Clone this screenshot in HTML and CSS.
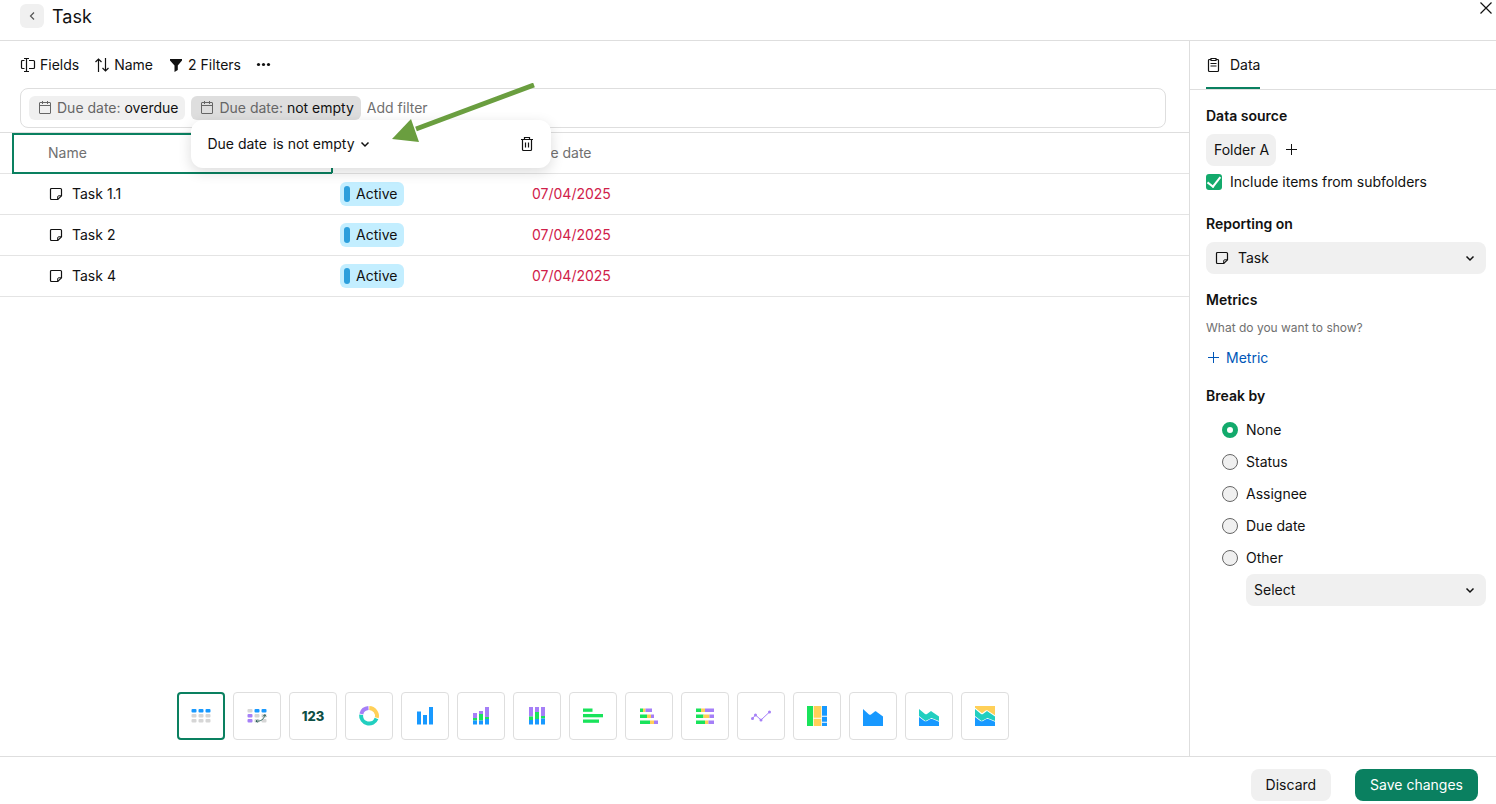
FILE: index.html
```html
<!DOCTYPE html>
<html lang="en">
<head>
    <meta charset="UTF-8">
    <meta name="viewport" content="width=device-width, initial-scale=1.0">
    <title>Task</title>
    <link rel="stylesheet" href="styles.css">
</head>
<body>
    <svg class="sprite" aria-hidden="true">
        <symbol id="i-note" viewBox="0 0 16 16">
            <path d="M3.500 2.500h9a1 1 0 0 1 1 1v6.300l-3.700 3.700H3.500a1 1 0 0 1-1-1v-9a1 1 0 0 1 1-1z" fill="none" stroke="currentColor" stroke-width="1.200"/>
            <path d="M9.700 13.500v-2.700a1 1 0 0 1 1-1h2.800" fill="none" stroke="currentColor"/>
        </symbol>
        <symbol id="i-calendar" viewBox="0 0 16 16">
            <path d="M3 2.500h10a.5.5 0 0 1 .5.5v10a.5.5 0 0 1-.5.5H3a.5.5 0 0 1-.5-.5V3a.5.5 0 0 1 .5-.5zM2.500 5.500h11M5.500 1v3M10.500 1v3" fill="none" stroke="currentColor"/>
        </symbol>
        <symbol id="i-chevron" viewBox="0 0 16 16">
            <path d="M4.500 6.500 8 10l3.500-3.500" fill="none" stroke="currentColor" stroke-width="1.500"/>
        </symbol>
        <symbol id="i-plus" viewBox="0 0 16 16">
            <path d="M7.500 2v11M2 7.500h11" fill="none" stroke="currentColor"/>
        </symbol>
    </svg>

    <header class="header">
        <button class="back-btn" aria-label="Back">
            <svg width="16" height="16" viewBox="0 0 16 16"><path d="M10 4.500 6.500 8l3.500 3.500" fill="none" stroke="currentColor" stroke-width="1.200"/></svg>
        </button>
        <h1>Task</h1>
        <button class="close-btn" aria-label="Close">
            <svg width="16" height="16" viewBox="0 0 16 16"><path d="M2.500 2.500l11 11M13.500 2.500l-11 11" fill="none" stroke="currentColor" stroke-width="1.200"/></svg>
        </button>
    </header>

    <div class="content">
        <main class="main">
            <div class="toolbar">
                <button class="tool-btn">
                    <svg width="16" height="16" viewBox="0 0 16 16"><path d="M4.500 3.500h-2a1 1 0 0 0-1 1v6a1 1 0 0 0 1 1h2M9 3.500h4.500a1 1 0 0 1 1 1v6a1 1 0 0 1-1 1H9M6.500 1.500v13M4 1.500h5M4 14.500h5" fill="none" stroke="currentColor" stroke-width="1.200"/></svg>
                    Fields
                </button>
                <button class="tool-btn">
                    <svg width="16" height="16" viewBox="0 0 16 16"><path d="M4.500 15V2M1.500 5l3-3 3 3M11.500 1v13M8.500 11l3 3 3-3" fill="none" stroke="currentColor" stroke-width="1.200"/></svg>
                    Name
                </button>
                <button class="tool-btn">
                    <svg width="16" height="16" viewBox="0 0 16 16"><path d="M2 2h12v1.500L9.800 8.500V13L6.500 15V8.500L2 3.500z" fill="currentColor"/></svg>
                    2 Filters
                </button>
                <button class="tool-btn" aria-label="More">
                    <svg width="16" height="16" viewBox="0 0 16 16" fill="currentColor"><circle cx="2.500" cy="7.500" r="1.600"/><circle cx="7.500" cy="7.500" r="1.600"/><circle cx="12.500" cy="7.500" r="1.600"/></svg>
                </button>
            </div>

            <div class="filter-bar">
                <button class="chip">
                    <svg width="16" height="16"><use href="#i-calendar"/></svg>
                    <span>Due date: <b>overdue</b></span>
                </button>
                <div class="chip-wrap">
                    <button class="chip chip-open">
                        <svg width="16" height="16"><use href="#i-calendar"/></svg>
                        <span>Due date: <b>not empty</b></span>
                    </button>
                    <div class="popover">
                        <label for="condition">Due date</label>
                        <div class="select-inline">
                            <select id="condition"><option>is not empty</option></select>
                            <svg width="16" height="16"><use href="#i-chevron"/></svg>
                        </div>
                        <button class="delete-btn" aria-label="Delete filter">
                            <svg width="16" height="16" viewBox="0 0 16 16"><path d="M2 3.500h12M5.500 3.500v-2h5v2M3.500 3.500v10a1 1 0 0 0 1 1h7a1 1 0 0 0 1-1v-10M6.500 6.500v5M9.500 6.500v5" fill="none" stroke="currentColor" stroke-width="1.200"/></svg>
                        </button>
                        <svg class="pointer" width="144" height="60" viewBox="0 0 144 60">
                            <path d="M142 2 24 46" stroke="#6a9e3f" stroke-width="5" fill="none"/>
                            <path d="M0 56 19 36 27 59z" fill="#6a9e3f"/>
                        </svg>
                    </div>
                </div>
                <input class="filter-input" type="text" placeholder="Add filter" aria-label="Add filter">
            </div>

            <table class="items">
                <thead>
                    <tr>
                        <th class="col-name"><div class="active-cell">Name</div></th>
                        <th class="col-status">Status</th>
                        <th>Due date</th>
                    </tr>
                </thead>
                <tbody>
                    <tr>
                        <td><div class="item-name"><svg width="16" height="16"><use href="#i-note"/></svg>Task 1.1</div></td>
                        <td><span class="status">Active</span></td>
                        <td class="overdue">07/04/2025</td>
                    </tr>
                    <tr>
                        <td><div class="item-name"><svg width="16" height="16"><use href="#i-note"/></svg>Task 2</div></td>
                        <td><span class="status">Active</span></td>
                        <td class="overdue">07/04/2025</td>
                    </tr>
                    <tr>
                        <td><div class="item-name"><svg width="16" height="16"><use href="#i-note"/></svg>Task 4</div></td>
                        <td><span class="status">Active</span></td>
                        <td class="overdue">07/04/2025</td>
                    </tr>
                </tbody>
            </table>

            <div class="chart-types">
                <button class="chart-btn selected" aria-label="Table">
                    <svg width="24" height="24" viewBox="0 0 24 24">
                        <g fill="#1899ff"><rect x="2.500" y="5" width="5" height="3.500" rx="1"/><rect x="9.500" y="5" width="5" height="3.500" rx="1"/><rect x="16.500" y="5" width="5" height="3.500" rx="1"/></g>
                        <g fill="#d6d6d6"><rect x="2.500" y="10" width="5" height="3.500" rx="1"/><rect x="9.500" y="10" width="5" height="3.500" rx="1"/><rect x="16.500" y="10" width="5" height="3.500" rx="1"/><rect x="2.500" y="15" width="5" height="3.500" rx="1"/><rect x="9.500" y="15" width="5" height="3.500" rx="1"/><rect x="16.500" y="15" width="5" height="3.500" rx="1"/></g>
                    </svg>
                </button>
                <button class="chart-btn" aria-label="Pivot table">
                    <svg width="24" height="24" viewBox="0 0 24 24">
                        <g fill="#d6d6d6"><rect x="2.500" y="5" width="5" height="3.500" rx="1"/><rect x="9.500" y="10" width="5" height="3.500" rx="1"/><rect x="16.500" y="10" width="5" height="3.500" rx="1"/><rect x="9.500" y="15" width="5" height="3.500" rx="1"/><rect x="16.500" y="15" width="5" height="3.500" rx="1"/></g>
                        <g fill="#1899ff"><rect x="9.500" y="5" width="5" height="3.500" rx="1"/><rect x="16.500" y="5" width="5" height="3.500" rx="1"/></g>
                        <g fill="#a57ff7"><rect x="2.500" y="10" width="5" height="3.500" rx="1"/><rect x="2.500" y="15" width="5" height="3.500" rx="1"/></g>
                        <path d="M11 17.200c5 .3 8-2 8.700-6M18 12.300l1.800-1.800 1.200 2M12.300 15.800 11 17.200l1.500 1.200" fill="none" stroke="#0f4f46" stroke-width=".8"/>
                    </svg>
                </button>
                <button class="chart-btn number">123</button>
                <button class="chart-btn" aria-label="Donut chart">
                    <svg width="24" height="24" viewBox="0 0 24 24" fill="none" stroke-width="4">
                        <path d="M12.300 4a8 8 0 0 1 7.500 9.700" stroke="#ffd058"/>
                        <path d="M19.500 14.500a8 8 0 0 1-15.400-3.700" stroke="#22cfc0"/>
                        <path d="M4.300 9.900A8 8 0 0 1 11.500 4" stroke="#a57ff7"/>
                    </svg>
                </button>
                <button class="chart-btn" aria-label="Column chart">
                    <svg width="24" height="24" viewBox="0 0 24 24" fill="#1899ff"><rect x="4" y="7.500" width="4" height="13"/><rect x="10" y="11" width="4" height="9.500"/><rect x="16" y="3" width="4" height="17.500"/></svg>
                </button>
                <button class="chart-btn" aria-label="Stacked column chart">
                    <svg width="24" height="24" viewBox="0 0 24 24">
                        <path d="M4 9h4v5H4zM10 7h4v3h-4zM16 3h4v10h-4z" fill="#a57ff7"/>
                        <path d="M4 14h4v2.500H4zM10 10h4v6.500h-4zM16 13h4v2h-4z" fill="#19e35b"/>
                        <path d="M4 16.500h4v4H4zM10 16.500h4v4h-4zM16 15h4v5.500h-4z" fill="#1899ff"/>
                    </svg>
                </button>
                <button class="chart-btn" aria-label="100% stacked column chart">
                    <svg width="24" height="24" viewBox="0 0 24 24">
                        <path d="M4 3h4v9.500H4zM10 3h4v5h-4zM16 3h4v9h-4z" fill="#a57ff7"/>
                        <path d="M4 12.500h4V16H4zM10 8h4v7h-4zM16 12h4v2.500h-4z" fill="#19e35b"/>
                        <path d="M4 16h4v4.500H4zM10 15h4v5.500h-4zM16 14.500h4v6h-4z" fill="#1899ff"/>
                    </svg>
                </button>
                <button class="chart-btn" aria-label="Bar chart">
                    <svg width="24" height="24" viewBox="0 0 24 24" fill="#19e35b"><rect x="2" y="4.500" width="9.500" height="3.300"/><rect x="2" y="10" width="20" height="3.300"/><rect x="2" y="15.500" width="16" height="3.300"/></svg>
                </button>
                <button class="chart-btn" aria-label="Stacked bar chart">
                    <svg width="24" height="24" viewBox="0 0 24 24">
                        <path d="M3 4.500h3V8H3zM3 10.500h7V14H3zM3 16.500h10V20H3z" fill="#19e35b"/>
                        <path d="M6 4.500h2.500V8H6zM10 10.500h4V14h-4zM13 16.500h4V20h-4z" fill="#ffd058"/>
                        <path d="M8.500 4.500H15V8H8.500zM14 10.500h3V14h-3zM17 16.500h4V20h-4z" fill="#a57ff7"/>
                    </svg>
                </button>
                <button class="chart-btn" aria-label="100% stacked bar chart">
                    <svg width="24" height="24" viewBox="0 0 24 24">
                        <path d="M3 4.500h5V8H3zM3 10.500h7.500V14H3zM3 16.500h9V20H3z" fill="#19e35b"/>
                        <path d="M8 4.500h4V8H8zM10.500 10.500h6V14h-6zM12 16.500h3.500V20H12z" fill="#ffd058"/>
                        <path d="M12 4.500h9V8h-9zM16.500 10.500H21V14h-4.500zM15.500 16.500H21V20h-5.500z" fill="#a57ff7"/>
                    </svg>
                </button>
                <button class="chart-btn" aria-label="Line chart">
                    <svg width="24" height="24" viewBox="0 0 24 24" fill="#a57ff7">
                        <path d="M3.500 14.500 6.500 11l5.500 5 8.500-8" fill="none" stroke="#a57ff7"/>
                        <circle cx="3.500" cy="14.500" r="1.500"/><circle cx="6.500" cy="11" r="1.500"/><circle cx="12" cy="16" r="1.500"/><circle cx="20.500" cy="8" r="1.500"/>
                    </svg>
                </button>
                <button class="chart-btn" aria-label="Treemap">
                    <svg width="24" height="24" viewBox="0 0 24 24">
                        <path d="M2 2h6v20H2z" fill="#19e35b"/>
                        <path d="M8.700 2h7.600v11.700H8.700zM8.700 14.700h7.600V22H8.700z" fill="#ffd058"/>
                        <path d="M17 2h5v9.700h-5zM17 12.700h5v5h-5zM17 18.700h5V22h-5z" fill="#1899ff"/>
                    </svg>
                </button>
                <button class="chart-btn" aria-label="Area chart">
                    <svg width="24" height="24" viewBox="0 0 24 24"><path d="M2 5l6 5.500c1 .6 1.500.3 2 0l3.500-2.800c1-.6 1.500-.3 2 0L22 12.500V22H2z" fill="#1899ff"/></svg>
                </button>
                <button class="chart-btn" aria-label="Stacked area chart">
                    <svg width="24" height="24" viewBox="0 0 24 24">
                        <path d="M2 5l6 5c1 .6 1.500.3 2 0l3-2.300c1-.6 1.500-.3 2 0L22 12.500V17l-7.500-3-6 3L2 12z" fill="#22cfc0"/>
                        <path d="M2 13l5 3.800c1 .6 2 .7 3 .2l3-1.700c1-.4 2-.3 3 0L22 17.800V22H2z" fill="#1899ff"/>
                    </svg>
                </button>
                <button class="chart-btn" aria-label="100% stacked area chart">
                    <svg width="24" height="24" viewBox="0 0 24 24">
                        <path d="M2 2h20v9.200l-7-4.400c-1-.6-2-.6-3 .1L9 9.200 2 3.800z" fill="#ffd058"/>
                        <path d="M2 5l6 5c1 .6 1.500.3 2 0l3-2.300c1-.6 1.500-.3 2 0L22 12.500V17l-7.500-3-6 3L2 12z" fill="#22cfc0"/>
                        <path d="M2 13l5 3.800c1 .6 2 .7 3 .2l3-1.700c1-.4 2-.3 3 0L22 17.800V22H2z" fill="#1899ff"/>
                    </svg>
                </button>
            </div>
        </main>

        <aside class="sidebar">
            <div class="tabs">
                <button class="tab">
                    <svg width="16" height="16" viewBox="0 0 16 16"><path d="M5 2.500H3.500a1 1 0 0 0-1 1v10a1 1 0 0 0 1 1h8a1 1 0 0 0 1-1v-10a1 1 0 0 0-1-1H10M5 1.500h5v2H5zM4.500 6.500h6M4.500 9h6" fill="none" stroke="currentColor" stroke-width="1.200"/></svg>
                    Data
                </button>
            </div>

            <div class="panel">
                <section class="section">
                    <h2>Data source</h2>
                    <div class="source-row">
                        <button class="source">Folder A</button>
                        <button class="add-btn" aria-label="Add source"><svg width="16" height="16"><use href="#i-plus"/></svg></button>
                    </div>
                    <label class="check"><input type="checkbox" checked>Include items from subfolders</label>
                </section>

                <section class="section">
                    <h2><label for="report">Reporting on</label></h2>
                    <div class="select-box with-icon">
                        <svg class="lead" width="16" height="16"><use href="#i-note"/></svg>
                        <select id="report"><option>Task</option></select>
                        <svg class="arrow" width="16" height="16"><use href="#i-chevron"/></svg>
                    </div>
                </section>

                <section class="section">
                    <h2>Metrics</h2>
                    <p class="hint">What do you want to show?</p>
                    <button class="metric-btn"><svg width="16" height="16"><use href="#i-plus"/></svg>Metric</button>
                </section>

                <section class="section">
                    <h2>Break by</h2>
                    <div class="radios">
                        <label><input type="radio" name="break" checked>None</label>
                        <label><input type="radio" name="break">Status</label>
                        <label><input type="radio" name="break">Assignee</label>
                        <label><input type="radio" name="break">Due date</label>
                        <label><input type="radio" name="break">Other</label>
                        <div class="select-box other">
                            <select aria-label="Other field"><option>Select</option></select>
                            <svg class="arrow" width="16" height="16"><use href="#i-chevron"/></svg>
                        </div>
                    </div>
                </section>
            </div>
        </aside>
    </div>

    <footer class="footer">
        <button class="btn">Discard</button>
        <button class="btn btn-primary">Save changes</button>
    </footer>
</body>
</html>
```

FILE: styles.css
```css
* {
    box-sizing: border-box;
}

body {
    margin: 0;
    min-height: 100vh;
    display: flex;
    flex-direction: column;
    font-family: Inter, "Liberation Sans", sans-serif;
    font-size: 14px;
    line-height: 20px;
    color: #111;
    background: #fff;
}

button, input, select {
    font: inherit;
    color: inherit;
    margin: 0;
}

button {
    display: flex;
    align-items: center;
    padding: 0;
    border: none;
    background: none;
    cursor: pointer;
}

svg {
    display: block;
    flex: none;
}

select {
    appearance: none;
    border: none;
    background: none;
    padding: 0;
    cursor: pointer;
}

.sprite {
    position: absolute;
    width: 0;
    height: 0;
}

/* Header */
.header {
    display: flex;
    align-items: flex-start;
    gap: 8px;
    height: 41px;
    padding: 4px 2px 0 20px;
    border-bottom: 1px solid #dedede;
}

.back-btn {
    justify-content: center;
    width: 24px;
    height: 24px;
    border-radius: 6px;
    background: #f0f0f0;
    color: #555;
}

h1 {
    margin: 0;
    font-size: 18px;
    line-height: 26px;
    font-weight: 400;
}

.close-btn {
    margin: -4px 0 0 auto;
}

/* Layout */
.content {
    flex: 1;
    display: flex;
}

.main {
    flex: 1;
    display: flex;
    flex-direction: column;
}

.sidebar {
    width: 307px;
    border-left: 1px solid #dedede;
}

/* Toolbar and filters */
.toolbar {
    display: flex;
    gap: 15px;
    padding: 14px 20px 13px;
}

.tool-btn {
    gap: 4px;
}

.filter-bar {
    display: flex;
    align-items: center;
    gap: 6px;
    height: 40px;
    margin: 0 23px 4px 20px;
    padding: 0 8px;
    border: 1px solid #dedede;
    border-radius: 8px;
}

.chip-wrap {
    position: relative;
}

.chip {
    gap: 4px;
    height: 24px;
    padding: 0 7px 0 8px;
    border-radius: 6px;
    background: #f0f0f0;
    color: #666;
    white-space: nowrap;
}

.chip b {
    font-weight: 400;
    color: #111;
}

.chip-open {
    background: #dedede;
}

.filter-input {
    flex: 1;
    border: none;
    outline: none;
    padding: 0;
    background: none;
}

.filter-input::placeholder {
    color: #707070;
    opacity: 1;
}

.popover {
    position: absolute;
    z-index: 1;
    top: 24px;
    left: 0;
    width: 360px;
    height: 48px;
    display: flex;
    align-items: center;
    gap: 6px;
    padding: 0 16px;
    border-radius: 12px;
    background: #fff;
    box-shadow: 0 4px 14px rgba(0, 0, 0, 0.14);
}

.select-inline {
    display: flex;
    align-items: center;
    gap: 2px;
}

.delete-btn {
    margin-left: auto;
}

.pointer {
    position: absolute;
    left: 201px;
    top: -37px;
    pointer-events: none;
}

/* Items table */
.items {
    width: 100%;
    table-layout: fixed;
    border-spacing: 0;
    border-top: 1px solid #dedede;
}

th, td {
    height: 41px;
    padding: 0 8px;
    text-align: left;
    border-bottom: 1px solid #e4e4e4;
}

th {
    font-weight: 400;
    color: #707070;
}

.col-name {
    width: 332px;
    padding: 0 0 0 12px;
}

.col-status {
    width: 192px;
}

.active-cell {
    width: 321px;
    height: 41px;
    margin-bottom: -1px;
    padding: 8px 34px;
    border: 2px solid #0a8060;
}

.item-name {
    display: flex;
    align-items: center;
    gap: 8px;
    padding-left: 40px;
}

.status {
    display: inline-flex;
    align-items: center;
    gap: 6px;
    height: 24px;
    padding: 0 7px 0 4px;
    border-radius: 6px;
    background: #c3eeff;
    vertical-align: middle;
}

.status::before {
    content: "";
    width: 6px;
    height: 16px;
    border-radius: 3px;
    background: #2d9fdc;
}

.overdue {
    color: #d0214a;
}

/* Chart type picker */
.chart-types {
    display: flex;
    justify-content: center;
    gap: 8px;
    margin-top: auto;
    padding: 16px 3px 16px 0;
}

.chart-btn {
    justify-content: center;
    width: 48px;
    height: 48px;
    border: 1px solid #dedede;
    border-radius: 4px;
    background: #fff;
}

.chart-btn.selected {
    border: 2px solid #0a8060;
}

.number {
    font-size: 13px;
    font-weight: 800;
    color: #0f4f46;
}

/* Sidebar */
.tabs {
    display: flex;
    height: 49px;
    padding: 0 16px;
    border-bottom: 1px solid #dedede;
}

.tab {
    gap: 8px;
    border-top: 2px solid transparent;
    border-bottom: 2px solid #0a8060;
}

.panel {
    display: flex;
    flex-direction: column;
    gap: 16px;
    padding: 16px 10px 16px 16px;
}

.section {
    display: flex;
    flex-direction: column;
    align-items: stretch;
    gap: 8px;
}

h2 {
    margin: 0;
    font-size: 14px;
    line-height: 20px;
    font-weight: 600;
}

.source-row {
    display: flex;
    align-items: center;
    gap: 8px;
}

.source {
    height: 32px;
    padding: 0 7px 0 8px;
    border-radius: 8px;
    background: #f0f0f0;
}

.check {
    display: flex;
    align-items: center;
    gap: 8px;
    height: 16px;
    margin-bottom: 8px;
}

.check input {
    appearance: none;
    display: flex;
    align-items: center;
    justify-content: center;
    width: 16px;
    height: 16px;
    border-radius: 3px;
    background: #13aa6c;
}

.check input::before {
    content: "";
    width: 6px;
    height: 11px;
    margin-bottom: 3px;
    border: solid #fff;
    border-width: 0 2px 2px 0;
    transform: rotate(38deg);
}

.select-box {
    display: grid;
    align-items: center;
    height: 32px;
    border-radius: 8px;
    background: #f0f0f0;
}

.select-box > * {
    grid-area: 1 / 1;
}

.select-box select {
    height: 32px;
    padding: 0 32px 0 8px;
}

.with-icon select {
    padding-left: 32px;
}

.lead {
    margin-left: 8px;
}

.arrow {
    justify-self: end;
    margin-right: 8px;
    pointer-events: none;
}

.hint {
    margin: 0;
    font-size: 12px;
    line-height: 20px;
    color: #707070;
}

.metric-btn {
    gap: 4px;
    color: #0056b8;
    margin-top: 2px;
    margin-bottom: 2px;
}

.radios {
    display: flex;
    flex-direction: column;
    padding-left: 16px;
}

.radios label {
    display: flex;
    align-items: center;
    gap: 8px;
    height: 32px;
}

.radios input {
    appearance: none;
    width: 16px;
    height: 16px;
    border: 1px solid #666;
    border-radius: 50%;
    background: #f0f0f0;
}

.radios input:checked {
    border: 5px solid #13aa6c;
    background: #fff;
}

.other {
    margin-left: 24px;
}

/* Footer */
.footer {
    display: flex;
    justify-content: flex-end;
    gap: 24px;
    padding: 12px 18px 3px;
    border-top: 1px solid #dedede;
}

.btn {
    height: 32px;
    padding: 0 15px;
    border-radius: 8px;
    background: #f0f0f0;
}

.btn-primary {
    background: #0a8060;
    color: #fff;
}
```
